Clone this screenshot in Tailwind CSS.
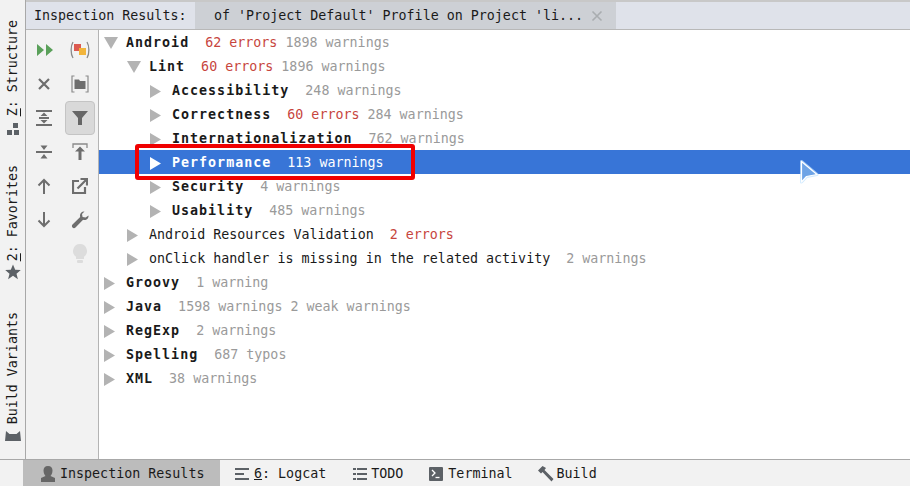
<!DOCTYPE html>
<html lang="en">
<head>
    <meta charset="UTF-8">
    <script src="https://cdn.jsdelivr.net/npm/@tailwindcss/browser@4"></script>
    <title>Inspection Results</title>
</head>
<body class="w-[910px] h-[486px] overflow-hidden bg-white font-['DejaVu_Sans_Mono',monospace] text-[13.33px] text-[#1a1a1a] relative">

<div class="flex flex-col h-[486px]">
    <div class="flex flex-1 min-h-0">
        <!-- left tool strip -->
        <div class="w-[26px] shrink-0 bg-[#f2f2f2] border-r border-[#a8a8a8] relative flex flex-col items-center">
            <div class="flex flex-col items-center pt-[20px] gap-[6px]">
                <span class="[writing-mode:vertical-rl] rotate-180 leading-none"><span class="underline">Z</span>: Structure</span>
                <svg width="14" height="14" viewBox="0 0 14 14" fill="#5c6166"><rect x="7" y="1" width="5" height="5"/><rect x="1" y="8" width="5" height="5"/><rect x="8" y="8" width="5" height="5"/></svg>
            </div>
            <div class="flex flex-col items-center mt-[29px] gap-[2px]">
                <span class="[writing-mode:vertical-rl] rotate-180 leading-none"><span class="underline">2</span>: Favorites</span>
                <svg width="16" height="16" viewBox="0 0 16 16" fill="#5c6166"><path d="M8 0.5l2.2 5.2 5.6.4-4.3 3.6 1.4 5.5L8 11.8l-4.9 3.4 1.4-5.5L.2 6.1l5.6-.4z"/></svg>
            </div>
            <div class="flex flex-col items-center mt-[32px] gap-[7px]">
                <span class="[writing-mode:vertical-rl] rotate-180 leading-none">Build Variants</span>
                <svg width="16" height="10" viewBox="0 0 16 10" fill="#5c6166"><path d="M1 0l3.500 3h7L15 0l1 10H0z"/></svg>
            </div>
        </div>

        <div class="flex-1 flex flex-col min-w-0">
            <!-- tab header -->
            <div class="h-[30px] shrink-0 bg-[#dfe2ea] border-t-2 border-b border-t-[#c8c8c8] border-b-[#b8b8b8] flex items-center">
                <div class="w-[169px] pl-[8px] shrink-0">Inspection Results:</div>
                <div class="w-[421px] h-full bg-[#cdd0d5] pl-[19px] flex items-center justify-between pr-[13px]">
                    <span>of 'Project Default' Profile on Project 'li...</span>
                    <svg width="12" height="12" viewBox="0 0 12 12" stroke="#a9adb0" stroke-width="1.6" fill="none"><path d="M1.5 1.5l9 9M10.5 1.5l-9 9"/></svg>
                </div>
            </div>

            <div class="flex flex-1 min-h-0">
                <!-- inspection toolbar -->
                <div class="w-[73px] shrink-0 bg-[#f2f2f2] border-r border-[#b4b4b4] grid grid-cols-[36px_36px] auto-rows-[34px] pt-[3px] pl-0 justify-start content-start">
                    <div class="flex items-center justify-center pl-[1px]">
                        <svg width="16" height="14" viewBox="0 0 16 14" fill="#5aa05a"><path d="M0 1l7 6-7 6zM9 1l7 6-7 6z"/></svg>
                    </div>
                    <div class="flex items-center justify-center">
                        <svg width="20" height="20" viewBox="0 0 20 20" fill="none"><path d="M3 2C.5 6 .5 14 3 18M17 2c2.500 4 2.500 12 0 16" stroke="#8a8a8a" stroke-width="1.300"/><rect x="4" y="4" width="7" height="7" fill="#dc5a50"/><rect x="9" y="8" width="7" height="7" fill="#f2b53c"/></svg>
                    </div>

                    <div class="flex items-center justify-center">
                        <svg width="14" height="14" viewBox="0 0 14 14" stroke="#6e6e6e" stroke-width="2.200" fill="none"><path d="M2 2l10 10M12 2L2 12"/></svg>
                    </div>
                    <div class="flex items-center justify-center">
                        <svg width="18" height="18" viewBox="0 0 18 18" fill="none"><path d="M3.500 1H1v16h2.500M14.500 1H17v16h-2.500" stroke="#8a8a8a" stroke-width="1.200"/><path d="M3.500 4.500h4.500l1 1.500h5.500v8h-11z" fill="#6e6e6e"/></svg>
                    </div>

                    <div class="flex items-center justify-center">
                        <svg width="16" height="18" viewBox="0 0 16 18" fill="#6e6e6e"><rect x="0" y="1" width="16" height="2"/><rect x="0" y="15" width="16" height="2"/><rect x="3" y="8" width="10" height="2"/><path d="M8 3.500l3.500 3.500h-7zM8 14.500l3.500-3.500h-7z"/></svg>
                    </div>
                    <div class="flex items-center justify-center">
                        <div class="w-[30px] h-[34px] rounded-[4px] bg-[#d9d9d9] border border-[#c4c4c4] flex items-center justify-center">
                            <svg width="16" height="16" viewBox="0 0 16 16" fill="#666"><path d="M0 1h16L10 8v7H6V8z"/></svg>
                        </div>
                    </div>

                    <div class="flex items-center justify-center">
                        <svg width="16" height="18" viewBox="0 0 16 18" fill="#6e6e6e"><rect x="0" y="8" width="16" height="2"/><path d="M8 7L4.500 2.500h7zM8 11l3.500 4.500h-7z"/></svg>
                    </div>
                    <div class="flex items-center justify-center">
                        <svg width="16" height="18" viewBox="0 0 16 18" fill="none"><path d="M1 5V1h14v4" stroke="#8a8a8a" stroke-width="1.300"/><path d="M8 3.500l5 5H9.500V17h-3V8.500H3z" fill="#6e6e6e"/></svg>
                    </div>

                    <div class="flex items-center justify-center">
                        <svg width="14" height="16" viewBox="0 0 14 16" fill="none" stroke="#6e6e6e" stroke-width="2"><path d="M7 16V2M1.500 7.500L7 2l5.500 5.500"/></svg>
                    </div>
                    <div class="flex items-center justify-center">
                        <svg width="16" height="16" viewBox="0 0 16 16" fill="none" stroke="#6e6e6e" stroke-width="2.200"><path d="M7 3H1v12h12V9M5.500 10.500L14 2M8.500 1H15v6.500"/></svg>
                    </div>

                    <div class="flex items-center justify-center">
                        <svg width="14" height="16" viewBox="0 0 14 16" fill="none" stroke="#6e6e6e" stroke-width="2"><path d="M7 0v14M1.500 8.500L7 14l5.500-5.500"/></svg>
                    </div>
                    <div class="flex items-center justify-center">
                        <svg width="18" height="18" viewBox="0 0 18 18" fill="#6e6e6e"><path d="M17.500 4.500c.3 2.500-1.500 4.500-4 4.500-.5 0-1 0-1.400-.2L4.500 16.500c-.9.900-2.200.900-3 0-.8-.8-.8-2.100 0-3l7.700-7.600C9 5.500 9 5 9 4.500 9 2 11 .2 13.500.500l-2.500 2.500.6 3 3 .6z"/></svg>
                    </div>

                    <div></div>
                    <div class="flex items-center justify-center">
                        <svg width="14" height="20" viewBox="0 0 14 20" fill="#dcdcdc"><path d="M7 0a7 7 0 0 1 4 12.700V15H3v-2.300A7 7 0 0 1 7 0z"/><rect x="4" y="16" width="6" height="3" rx="1"/></svg>
                    </div>
                </div>

                <!-- tree -->
                <div class="flex-1 min-w-0 [&>div]:pt-[2px]">
                    <div class="h-[24px] flex items-center pl-[5px]">
                        <svg class="mr-[8px]" width="14" height="12" viewBox="0 0 14 12" fill="#b3b3b3"><path d="M0 0h14L7 12z"/></svg>
                        <b class="tracking-[1px] mr-[16px]">Android</b><span class="text-[#c7453d] mr-[8px]">62 errors</span><span class="text-[#9a9a9a]">1898 warnings</span>
                    </div>
                    <div class="h-[24px] flex items-center pl-[28px]">
                        <svg class="mr-[8px]" width="14" height="12" viewBox="0 0 14 12" fill="#b3b3b3"><path d="M0 0h14L7 12z"/></svg>
                        <b class="tracking-[1px] mr-[16px]">Lint</b><span class="text-[#c7453d] mr-[8px]">60 errors</span><span class="text-[#9a9a9a]">1896 warnings</span>
                    </div>
                    <div class="h-[24px] flex items-center pl-[51px]">
                        <svg class="mr-[11px]" width="11" height="13" viewBox="0 0 11 13" fill="#b3b3b3"><path d="M0 0l11 6.500L0 13z"/></svg>
                        <b class="tracking-[1px] mr-[16px]">Accessibility</b><span class="text-[#9a9a9a]">248 warnings</span>
                    </div>
                    <div class="h-[24px] flex items-center pl-[51px]">
                        <svg class="mr-[11px]" width="11" height="13" viewBox="0 0 11 13" fill="#b3b3b3"><path d="M0 0l11 6.500L0 13z"/></svg>
                        <b class="tracking-[1px] mr-[16px]">Correctness</b><span class="text-[#c7453d] mr-[8px]">60 errors</span><span class="text-[#9a9a9a]">284 warnings</span>
                    </div>
                    <div class="h-[24px] flex items-center pl-[51px]">
                        <svg class="mr-[11px]" width="11" height="13" viewBox="0 0 11 13" fill="#b3b3b3"><path d="M0 0l11 6.500L0 13z"/></svg>
                        <b class="tracking-[1px] mr-[16px]">Internationalization</b><span class="text-[#9a9a9a]">762 warnings</span>
                    </div>
                    <div class="h-[24px] flex items-center pl-[51px] bg-[#3875d7] text-white">
                        <svg class="mr-[11px]" width="11" height="13" viewBox="0 0 11 13" fill="#fff"><path d="M0 0l11 6.500L0 13z"/></svg>
                        <b class="tracking-[1px] mr-[16px]">Performance</b><span>113 warnings</span>
                    </div>
                    <div class="h-[24px] flex items-center pl-[51px]">
                        <svg class="mr-[11px]" width="11" height="13" viewBox="0 0 11 13" fill="#b3b3b3"><path d="M0 0l11 6.500L0 13z"/></svg>
                        <b class="tracking-[1px] mr-[16px]">Security</b><span class="text-[#9a9a9a]">4 warnings</span>
                    </div>
                    <div class="h-[24px] flex items-center pl-[51px]">
                        <svg class="mr-[11px]" width="11" height="13" viewBox="0 0 11 13" fill="#b3b3b3"><path d="M0 0l11 6.500L0 13z"/></svg>
                        <b class="tracking-[1px] mr-[16px]">Usability</b><span class="text-[#9a9a9a]">485 warnings</span>
                    </div>
                    <div class="h-[24px] flex items-center pl-[28px]">
                        <svg class="mr-[11px]" width="11" height="13" viewBox="0 0 11 13" fill="#b3b3b3"><path d="M0 0l11 6.500L0 13z"/></svg>
                        <span class="mr-[16px]">Android Resources Validation</span><span class="text-[#c7453d]">2 errors</span>
                    </div>
                    <div class="h-[24px] flex items-center pl-[28px]">
                        <svg class="mr-[11px]" width="11" height="13" viewBox="0 0 11 13" fill="#b3b3b3"><path d="M0 0l11 6.500L0 13z"/></svg>
                        <span class="mr-[16px]">onClick handler is missing in the related activity</span><span class="text-[#9a9a9a]">2 warnings</span>
                    </div>
                    <div class="h-[24px] flex items-center pl-[5px]">
                        <svg class="mr-[11px]" width="11" height="13" viewBox="0 0 11 13" fill="#b3b3b3"><path d="M0 0l11 6.500L0 13z"/></svg>
                        <b class="tracking-[1px] mr-[16px]">Groovy</b><span class="text-[#9a9a9a]">1 warning</span>
                    </div>
                    <div class="h-[24px] flex items-center pl-[5px]">
                        <svg class="mr-[11px]" width="11" height="13" viewBox="0 0 11 13" fill="#b3b3b3"><path d="M0 0l11 6.500L0 13z"/></svg>
                        <b class="tracking-[1px] mr-[16px]">Java</b><span class="text-[#9a9a9a]">1598 warnings 2 weak warnings</span>
                    </div>
                    <div class="h-[24px] flex items-center pl-[5px]">
                        <svg class="mr-[11px]" width="11" height="13" viewBox="0 0 11 13" fill="#b3b3b3"><path d="M0 0l11 6.500L0 13z"/></svg>
                        <b class="tracking-[1px] mr-[16px]">RegExp</b><span class="text-[#9a9a9a]">2 warnings</span>
                    </div>
                    <div class="h-[24px] flex items-center pl-[5px]">
                        <svg class="mr-[11px]" width="11" height="13" viewBox="0 0 11 13" fill="#b3b3b3"><path d="M0 0l11 6.500L0 13z"/></svg>
                        <b class="tracking-[1px] mr-[16px]">Spelling</b><span class="text-[#9a9a9a]">687 typos</span>
                    </div>
                    <div class="h-[24px] flex items-center pl-[5px]">
                        <svg class="mr-[11px]" width="11" height="13" viewBox="0 0 11 13" fill="#b3b3b3"><path d="M0 0l11 6.500L0 13z"/></svg>
                        <b class="tracking-[1px] mr-[16px]">XML</b><span class="text-[#9a9a9a]">38 warnings</span>
                    </div>
                </div>
            </div>
        </div>
    </div>

    <!-- bottom tool bar -->
    <div class="h-[27px] shrink-0 bg-[#f2f2f2] border-t border-[#a8a8a8] flex items-stretch pl-[23px] [&>div]:pt-[2px]">
        <div class="w-[197px] bg-[#bcbcbc] flex items-center pl-[18px] gap-[5px]">
            <svg width="14" height="16" viewBox="0 0 14 16" fill="#666"><path d="M7 0c3 0 4.500 2 4.500 4.500S10.500 9 9.500 10l4.500 2v4H0v-4l4.500-2C3.500 9 2.500 7 2.500 4.500S4 0 7 0z"/></svg>
            <span>Inspection Results</span>
        </div>
        <div class="flex items-center pl-[15px] gap-[5px]">
            <svg width="14" height="12" viewBox="0 0 14 12" fill="#5c6166"><rect y="0" width="14" height="2"/><rect y="5" width="9" height="2"/><rect y="10" width="14" height="2"/></svg>
            <span><span class="underline">6</span>: Logcat</span>
        </div>
        <div class="flex items-center pl-[27px] gap-[4px]">
            <svg width="14" height="12" viewBox="0 0 14 12" fill="#5c6166"><rect y="0" width="3" height="2"/><rect x="4" y="0" width="10" height="2"/><rect y="5" width="3" height="2"/><rect x="4" y="5" width="10" height="2"/><rect y="10" width="3" height="2"/><rect x="4" y="10" width="10" height="2"/></svg>
            <span>TODO</span>
        </div>
        <div class="flex items-center pl-[26px] gap-[5px]">
            <svg width="14" height="14" viewBox="0 0 14 14"><rect width="14" height="14" rx="1" fill="#5c6166"/><path d="M3 3l3 3-3 3" stroke="#fff" stroke-width="1.300" fill="none"/><path d="M6.500 10.500h4" stroke="#fff" stroke-width="1.300"/></svg>
            <span>Terminal</span>
        </div>
        <div class="flex items-center pl-[25px] gap-[3px]">
            <svg width="16" height="16" viewBox="0 0 16 16" fill="#5c6166"><path d="M0 4.500L4.500 0 8 2 6.500 4 15.500 13l-2 2.500L4.500 6 3 7.500z"/></svg>
            <span>Build</span>
        </div>
    </div>
</div>

<!-- red highlight -->
<div class="absolute left-[135px] top-[144px] w-[280px] h-[36px] border-[4px] border-[#f00000] rounded-[3px]"></div>

<!-- mouse pointer -->
<svg class="absolute left-[796px] top-[156px]" width="28" height="32" viewBox="0 0 28 32" fill="none">
    <path d="M5.500 5.500v20.500l5-5.500 10.500-2z" fill="#7aaee8" stroke="#bfe3ff" stroke-width="3" stroke-linejoin="round" opacity="0.7"/>
    <path d="M5.500 5.500v20.500l5-5.500 10.500-2z" fill="#6ea4e6" stroke="#fff" stroke-width="1.200" stroke-linejoin="round"/>
</svg>

</body>
</html>
